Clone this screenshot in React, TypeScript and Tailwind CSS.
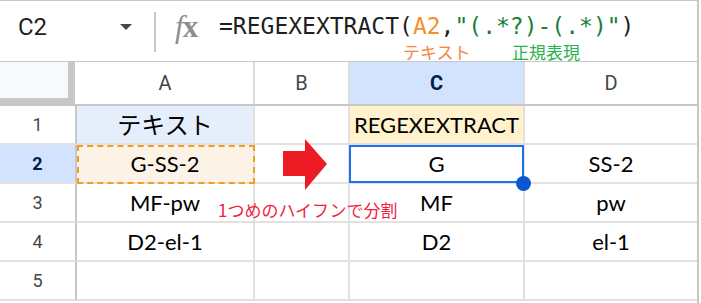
import React from "react";

const cellFont = "font-['Lato','Noto_Sans_CJK_JP',sans-serif]";

type Cell = { text?: string; cls?: string; extra?: React.ReactNode };

const cols = [
  { name: "A", w: "w-[178px]", border: "border-r-2" },
  { name: "B", w: "w-[95px]", border: "border-r-2" },
  { name: "C", w: "w-[175px]", border: "border-r-2", active: true },
  { name: "D", w: "w-[172px]", border: "" },
];

const rows: { n: number; active?: boolean; cells: Cell[] }[] = [
  {
    n: 1,
    cells: [
      { text: "テキスト", cls: "bg-[#e4effb] text-[24px]" },
      {},
      { text: "REGEXEXTRACT", cls: "bg-[#fff2cc]" },
      {},
    ],
  },
  {
    n: 2,
    active: true,
    cells: [
      {
        text: "G-SS-2",
        cls: "bg-[#fcf3e6]",
        extra: (
          <div className="absolute inset-0 -right-[2px] -bottom-[2px] border-2 border-dashed border-[#f39c24]" />
        ),
      },
      {},
      {
        text: "G",
        extra: (
          <>
            <div className="absolute -left-[1px] top-0 -right-[1px] -bottom-[1px] border-2 border-[#1a73e8]" />
            <div className="absolute -right-[8px] -bottom-[9px] w-[15px] h-[15px] rounded-full bg-[#0b57d0] z-10" />
          </>
        ),
      },
      { text: "SS-2" },
    ],
  },
  { n: 3, cells: [{ text: "MF-pw" }, {}, { text: "MF" }, { text: "pw" }] },
  { n: 4, cells: [{ text: "D2-el-1" }, {}, { text: "D2" }, { text: "el-1" }] },
  { n: 5, cells: [{}, {}, {}, {}] },
];

const FormulaBar = () => (
  <div className="relative h-[61px] border-b border-[#c7c7c7] flex items-start">
    <div className="w-[154px] h-[51px] flex items-center justify-between pl-[18px] pr-[22px]">
      <span className="font-['Roboto'] text-[24px] text-[#1f1f1f]">C2</span>
      <svg width="12" height="6" viewBox="0 0 12 6">
        <path d="M0 0h12L6 6z" fill="#444746" />
      </svg>
    </div>
    <div className="w-[2px] h-[40px] mt-[11px] bg-[#c7c7c7]" />
    <div className="w-[63px] h-[51px] flex items-center pl-[19px] font-['Liberation_Serif',serif] text-[31px] text-[#8e8e8e] leading-none">
      <span className="italic">f</span>
      <span className="font-bold -ml-[1px]">x</span>
    </div>
    <div className="h-[51px] flex items-center font-['DejaVu_Sans_Mono',monospace] text-[23px] text-[#1f1f1f] whitespace-pre">
      <span>=REGEXEXTRACT(</span>
      <span className="text-[#f4902c]">A2</span>
      <span>,</span>
      <span className="text-[#188038]">"(.*?)-(.*)"</span>
      <span>)</span>
    </div>
    <span className="absolute left-[403px] top-[38px] font-['Noto_Sans_CJK_JP',sans-serif] text-[17px] text-[#f7843f]">
      テキスト
    </span>
    <span className="absolute left-[512px] top-[38px] font-['Noto_Sans_CJK_JP',sans-serif] text-[17px] text-[#27b34a]">
      正規表現
    </span>
  </div>
);

const Grid = () => (
  <div>
    {/* column headers */}
    <div className="flex h-[44px] border-b-2 border-[#c7c7c7]">
      <div className="w-[77px] h-full flex">
        <div className="w-[75px] h-full bg-[#f8f9fa] border-r-[7px] border-b-[6px] border-[#c7c7c7]" />
      </div>
      {cols.map((c) => (
        <div
          key={c.name}
          className={`${c.w} h-full flex items-center justify-center font-['Roboto'] text-[20px] ${c.border} border-[#dadce0] ${
            c.active ? "bg-[#d3e3fd] text-[#041e49] font-bold" : "text-[#444746]"
          }`}
        >
          {c.name}
        </div>
      ))}
    </div>
    {rows.map((r) => (
      <div key={r.n} className="flex h-[39px]">
        <div
          className={`w-[77px] h-full flex items-center justify-center border-r-2 border-r-[#c7c7c7] border-b-2 border-b-[#e1e1e1] font-['Roboto'] text-[18px] ${
            r.active ? "bg-[#d3e3fd] text-[#041e49] font-bold" : "text-[#444746]"
          }`}
        >
          {r.n}
        </div>
        {r.cells.map((cell, i) => (
          <div
            key={i}
            className={`relative ${cols[i].w} h-full flex items-center justify-center ${cols[i].border} border-b-2 border-[#e1e1e1] ${cellFont} text-[22px] text-black ${
              cell.cls ?? ""
            }`}
          >
            {cell.text}
            {cell.extra}
          </div>
        ))}
      </div>
    ))}
  </div>
);

export default function App() {
  return (
    <div className="relative w-[701px] h-[303px] bg-white overflow-hidden">
      <div className="w-[699px] h-full border-t border-r-2 border-[#c7c7c7]">
        <FormulaBar />
        <Grid />
      </div>

      {/* red arrow */}
      <svg className="absolute left-[283px] top-[139px]" width="44" height="51" viewBox="0 0 44 51">
        <path d="M0 12H22V0L44 25L22 51V37H0Z" fill="#ed1c24" />
      </svg>

      <span className="absolute left-[218px] top-[201px] font-['Noto_Sans_CJK_JP',sans-serif] text-[17px] text-[#f2223e] leading-none">
        1つめのハイフンで分割
      </span>
    </div>
  );
}
